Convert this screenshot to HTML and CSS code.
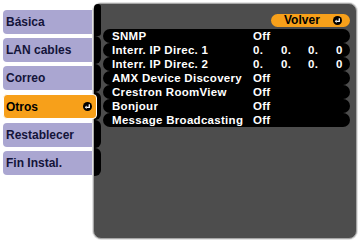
FILE: index.html
```html
<!DOCTYPE html>
<html lang="es">
<head>
    <meta charset="UTF-8">
    <meta name="viewport" content="width=device-width, initial-scale=1.0">
    <title>Otros</title>
    <link rel="stylesheet" href="styles.css">
</head>
<body>
    <div id="menu">
        <div class="tab">Básica</div>
        <div class="tab">LAN cables</div>
        <div class="tab">Correo</div>
        <div class="tab activo">Otros
            <svg class="enter" width="9" height="9" viewBox="0 0 9 9"><circle cx="4.5" cy="4.5" r="4.5" fill="#000"/><path d="M6.3 2.2V5.3H3.4" stroke="#fff" stroke-width="1.3" fill="none"/><path d="M3.6 3.6L1.8 5.3L3.6 7Z" fill="#fff"/></svg>
        </div>
        <div class="tab">Restablecer</div>
        <div class="tab">Fin Instal.</div>
    </div>

    <div id="panel">
        <div class="lomo">
            <div class="seg primero"></div>
            <div class="seg"></div>
            <div class="seg"></div>
            <div class="seg"></div>
            <div class="seg"></div>
            <div class="seg"></div>
        </div>
        <div class="contenido">
            <div class="barra">
                <div class="volver">Volver
                    <svg class="enter" width="9" height="9" viewBox="0 0 9 9"><circle cx="4.5" cy="4.5" r="4.5" fill="#000"/><path d="M6.3 2.2V5.3H3.4" stroke="#fff" stroke-width="1.3" fill="none"/><path d="M3.6 3.6L1.8 5.3L3.6 7Z" fill="#fff"/></svg>
                </div>
            </div>
            <div class="lista">
                <div class="fila"><span>SNMP</span><span>Off</span></div>
                <div class="fila"><span>Interr. IP Direc. 1</span><span>0.</span><span>0.</span><span>0.</span><span>0</span></div>
                <div class="fila"><span>Interr. IP Direc. 2</span><span>0.</span><span>0.</span><span>0.</span><span>0</span></div>
                <div class="fila"><span>AMX Device Discovery</span><span>Off</span></div>
                <div class="fila"><span>Crestron RoomView</span><span>Off</span></div>
                <div class="fila"><span>Bonjour</span><span>Off</span></div>
                <div class="fila"><span>Message Broadcasting</span><span>Off</span></div>
            </div>
        </div>
    </div>
</body>
</html>
```

FILE: styles.css
```css
body {
    margin: 0;
    padding: 3px;
    background-color: #ffffff;
    font-family: 'Liberation Sans', Arial, sans-serif;
    font-weight: bold;
    display: flex;
    align-items: flex-start;
}

#menu {
    width: 90px;
    padding-top: 7px;
    display: flex;
    flex-direction: column;
    gap: 4px;
}

.tab {
    height: 24px;
    background-color: #aaa6d1;
    border-radius: 4px 0 0 4px;
    color: #14143a;
    font-size: 12px;
    line-height: 24px;
    padding-left: 3px;
    display: flex;
    align-items: center;
}

.tab.activo {
    background-color: #f7a01a;
    color: #000000;
    border: 1px solid #ffffff;
    border-radius: 4px;
    height: 23px;
    margin-right: -4px;
    padding-left: 2px;
    padding-right: 4px;
    justify-content: space-between;
    position: relative;
    z-index: 1;
}

.enter {
    display: block;
}

#panel {
    width: 262px;
    height: 234px;
    background-color: #4d4d4d;
    border: 1px solid #a6a6a6;
    border-radius: 8px;
    box-shadow: 0 0 0 1px #e2e2e2;
    display: flex;
}

.lomo {
    width: 7px;
    display: flex;
    flex-direction: column;
}

.seg {
    height: 28px;
    background-color: #000000;
    border-radius: 0 6px 6px 0;
}

.seg.primero {
    height: 32px;
    border-radius: 8px 6px 6px 0;
}

.contenido {
    flex: 1;
    padding: 10px 6px 0 2px;
}

.barra {
    display: flex;
    justify-content: flex-end;
}

.volver {
    width: 79px;
    height: 13px;
    box-sizing: border-box;
    background-color: #f7a01a;
    border-radius: 7px;
    font-size: 12px;
    line-height: 13px;
    padding: 0 8px 0 13px;
    display: flex;
    justify-content: space-between;
    align-items: center;
    color: #000000;
}

.lista {
    margin-top: 2px;
}

.fila {
    height: 14px;
    background-color: #000000;
    border-radius: 7px;
    color: #ffffff;
    font-size: 11.5px;
    letter-spacing: 0.3px;
    line-height: 14px;
    padding-left: 9px;
    display: grid;
    grid-template-columns: 141px 28px 27px 28px auto;
}
```
